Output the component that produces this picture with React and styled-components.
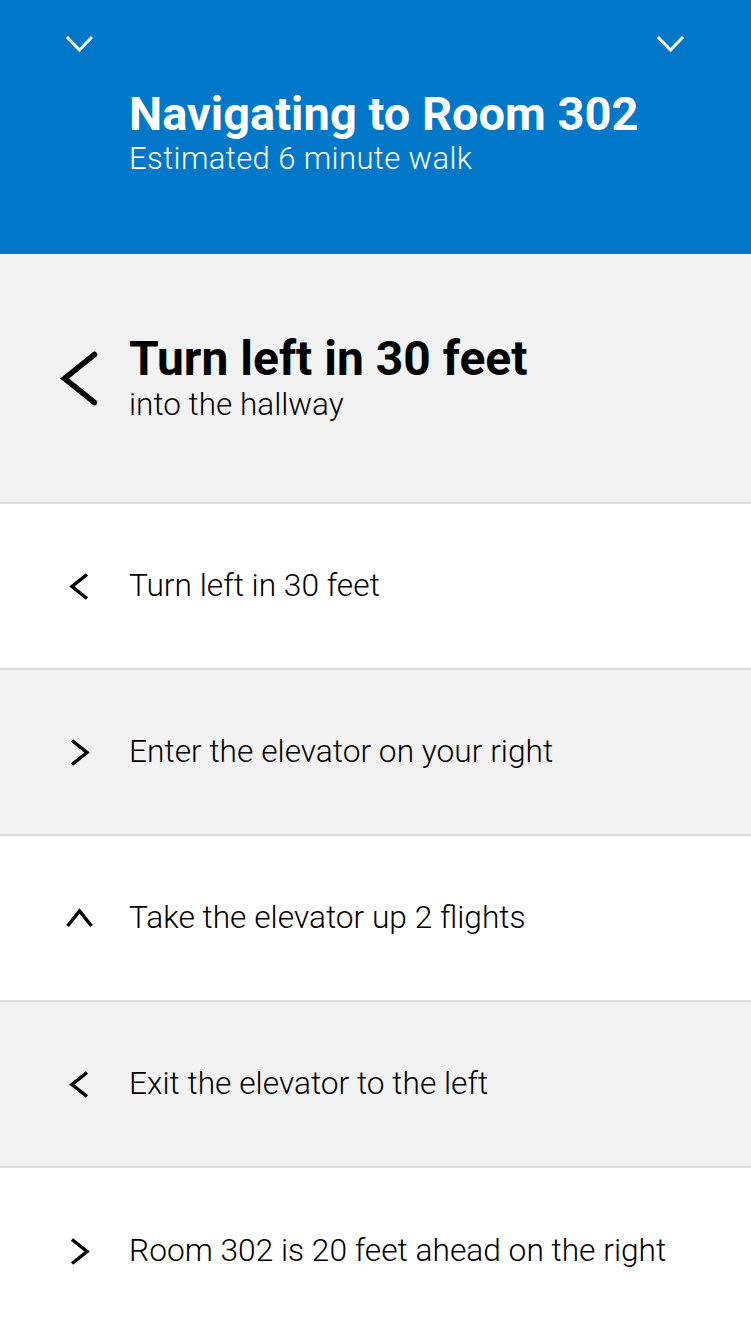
import React from "react";
import styled, { createGlobalStyle } from "styled-components";

const GlobalStyle = createGlobalStyle`
  html, body {
    margin: 0;
    padding: 0;
    background: #ffffff;
  }
  body {
    font-family: Roboto, "Liberation Sans", Arial, sans-serif;
    -webkit-font-smoothing: antialiased;
  }
`;

const Screen = styled.div`
  width: 751px;
  min-height: 1334px;
  display: flex;
  flex-direction: column;
`;

const Header = styled.header`
  height: 254px;
  background: #0077c8;
  color: #ffffff;
  display: flex;
  flex-direction: column;
  box-sizing: border-box;
  padding-top: 28px;
`;

const HeaderTop = styled.div`
  display: flex;
  justify-content: space-between;
  padding: 0 51px 0 49px;
`;

const IconCell = styled.div`
  width: 60px;
  flex: none;
  display: flex;
  align-items: center;
  justify-content: center;
`;

const HeaderText = styled.div`
  margin-top: 29px;
  padding-left: 129px;
`;

const Title = styled.h1`
  margin: 0;
  font-size: ${(p) => p.$size}px;
  font-weight: 700;
  line-height: 1.1;
`;

const Subtitle = styled.div`
  font-size: ${(p) => p.$size}px;
  font-weight: 300;
  line-height: 1.2;
  letter-spacing: ${(p) => p.$tracking || 0}px;
`;

const Hero = styled.section`
  height: 250px;
  box-sizing: border-box;
  background: #f2f2f2;
  border-bottom: 2px solid #dcdcdc;
  display: flex;
  align-items: center;
  gap: 20px;
  padding-left: 49px;
  color: #000000;
`;

const Steps = styled.ul`
  list-style: none;
  margin: 0;
  padding: 0;
`;

const Step = styled.li`
  height: 166px;
  box-sizing: border-box;
  background: ${(p) => (p.$shaded ? "#f2f2f2" : "#ffffff")};
  border-bottom: ${(p) => (p.$last ? "none" : "2px solid #dcdcdc")};
  display: flex;
  align-items: center;
  gap: 20px;
  padding-left: 49px;
  color: #000000;
`;

const StepText = styled.span`
  font-size: 31.7px;
  font-weight: 300;
  line-height: 1.2;
`;

const turns = { left: 0, up: 90, right: 180, down: 270 };

function Chevron({ dir = "left", w, h, sw, color = "#000", cap = "square" }) {
  const pad = sw;
  const size = Math.max(w, h) + pad * 2;
  const cx = size / 2;
  const cy = size / 2;
  const x0 = cx - w / 2;
  const x1 = cx + w / 2;
  const pts = `${x1},${cy - h / 2} ${x0},${cy} ${x1},${cy + h / 2}`;
  return (
    <svg
      width={size}
      height={size}
      viewBox={`0 0 ${size} ${size}`}
      style={{ transform: `rotate(${turns[dir]}deg)` }}
    >
      <polyline
        points={pts}
        fill="none"
        stroke={color}
        strokeWidth={sw}
        strokeLinecap={cap}
        strokeLinejoin="miter"
      />
    </svg>
  );
}

const steps = [
  { dir: "left", text: "Turn left in 30 feet" },
  { dir: "right", text: "Enter the elevator on your right" },
  { dir: "up", text: "Take the elevator up 2 flights" },
  { dir: "left", text: "Exit the elevator to the left" },
  { dir: "right", text: "Room 302 is 20 feet ahead on the right" },
];

export default function App() {
  return (
    <>
      <GlobalStyle />
      <Screen>
        <Header>
          <HeaderTop>
            <IconCell>
              <Chevron dir="down" w={13} h={25} sw={3} color="#ffffff" cap="butt" />
            </IconCell>
            <IconCell>
              <Chevron dir="down" w={13} h={25} sw={3} color="#ffffff" cap="butt" />
            </IconCell>
          </HeaderTop>
          <HeaderText>
            <Title $size={47}>Navigating to Room 302</Title>
            <Subtitle $size={31} $tracking={0.4}>Estimated 6 minute walk</Subtitle>
          </HeaderText>
        </Header>

        <Hero>
          <IconCell>
            <Chevron dir="left" w={30} h={48} sw={5.5} cap="round" />
          </IconCell>
          <div>
            <Title $size={48}>Turn left in 30 feet</Title>
            <Subtitle $size={31.5}>into the hallway</Subtitle>
          </div>
        </Hero>

        <Steps>
          {steps.map((s, i) => (
            <Step key={i} $shaded={i % 2 === 1} $last={i === steps.length - 1}>
              <IconCell>
                <Chevron dir={s.dir} w={15} h={24} sw={3.5} cap="butt" />
              </IconCell>
              <StepText>{s.text}</StepText>
            </Step>
          ))}
        </Steps>
      </Screen>
    </>
  );
}
